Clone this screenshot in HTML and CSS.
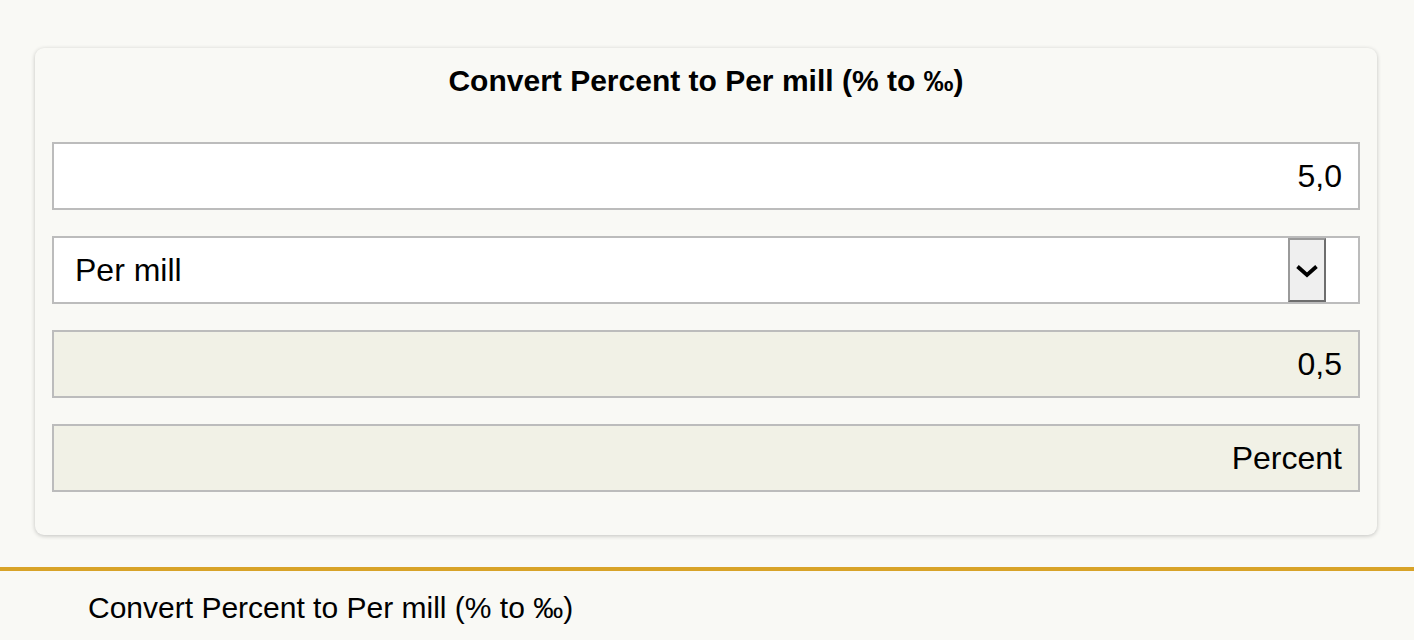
FILE: index.html
```html
<!DOCTYPE html>
<html>
<head>
<meta charset="utf-8">
<link rel="stylesheet" href="styles.css">
</head>
<body>
<div class="page">
  <div class="card">
    <h1 class="title">Convert Percent to Per mill (% to ‰)</h1>
    <div class="fields">
      <div class="field input">5,0</div>
      <div class="field select">
        <span class="select-label">Per mill</span>
        <span class="select-btn">
          <svg width="24" height="14" viewBox="0 0 24 14"><path d="M2.5 2.5 L12 11 L21.5 2.5" fill="none" stroke="#000" stroke-width="3.8"/></svg>
        </span>
      </div>
      <div class="field result">0,5</div>
      <div class="field result">Percent</div>
    </div>
  </div>
  <div class="footer">
    <p class="footer-text">Convert Percent to Per mill (% to ‰)</p>
  </div>
</div>
</body>
</html>
```
FILE: styles.css
```css
html, body {
  margin: 0;
  padding: 0;
  background: #f9f9f5;
  font-family: "Liberation Sans", Arial, sans-serif;
  color: #000;
}
.page {
  padding-top: 48px;
}
.card {
  margin: 0 37px 0 35px;
  background: #f9f9f5;
  border-radius: 9px;
  box-shadow: 0 1px 4px rgba(0, 0, 0, 0.22);
  padding: 18px 17px 43px 17px;
}
.title {
  margin: 0 0 46px 0;
  font-size: 30px;
  line-height: 30px;
  font-weight: bold;
  text-align: center;
}
.fields {
  display: flex;
  flex-direction: column;
  gap: 26px;
}
.field {
  box-sizing: border-box;
  height: 68px;
  border: 2px solid #bcbcbc;
  background: #fff;
  font-size: 32px;
  display: flex;
  align-items: center;
  justify-content: flex-end;
  padding: 0 16px 0 21px;
}
.result {
  background: #f1f1e6;
}
.select {
  justify-content: space-between;
  padding-right: 32px;
}
.select-btn {
  box-sizing: border-box;
  width: 38px;
  height: 64px;
  background: #efefef;
  border: 2px solid #9a9a9a;
  border-right-color: #6e6e6e;
  border-bottom-color: #6e6e6e;
  display: flex;
  align-items: center;
  justify-content: center;
  padding-top: 1px;
}
.select-btn svg {
  display: block;
}
.footer {
  margin-top: 32px;
  border-top: 4px solid #d8a328;
}
.footer-text {
  margin: 0;
  padding: 20px 0 0 88px;
  font-size: 30px;
  line-height: 34px;
}
```
